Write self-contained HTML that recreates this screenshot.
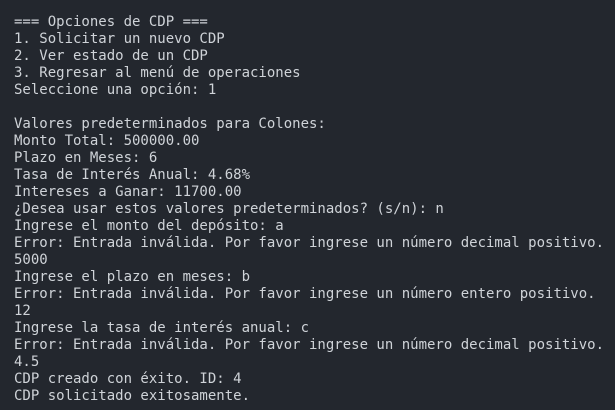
<!DOCTYPE html>
<html><head><meta charset="utf-8"><style>
html,body{margin:0;padding:0;}
body{width:615px;height:410px;background:#23272e;overflow:hidden;}
pre{margin:0;padding:14px 0 0 14px;font-family:"DejaVu Sans Mono","Liberation Mono",monospace;font-size:14px;line-height:17px;color:#cfd3d8;}
</style></head><body><pre>=== Opciones de CDP ===
1. Solicitar un nuevo CDP
2. Ver estado de un CDP
3. Regresar al menú de operaciones
Seleccione una opción: 1

Valores predeterminados para Colones:
Monto Total: 500000.00
Plazo en Meses: 6
Tasa de Interés Anual: 4.68%
Intereses a Ganar: 11700.00
¿Desea usar estos valores predeterminados? (s/n): n
Ingrese el monto del depósito: a
Error: Entrada inválida. Por favor ingrese un número decimal positivo.
5000
Ingrese el plazo en meses: b
Error: Entrada inválida. Por favor ingrese un número entero positivo.
12
Ingrese la tasa de interés anual: c
Error: Entrada inválida. Por favor ingrese un número decimal positivo.
4.5
CDP creado con éxito. ID: 4
CDP solicitado exitosamente.</pre></body></html>
